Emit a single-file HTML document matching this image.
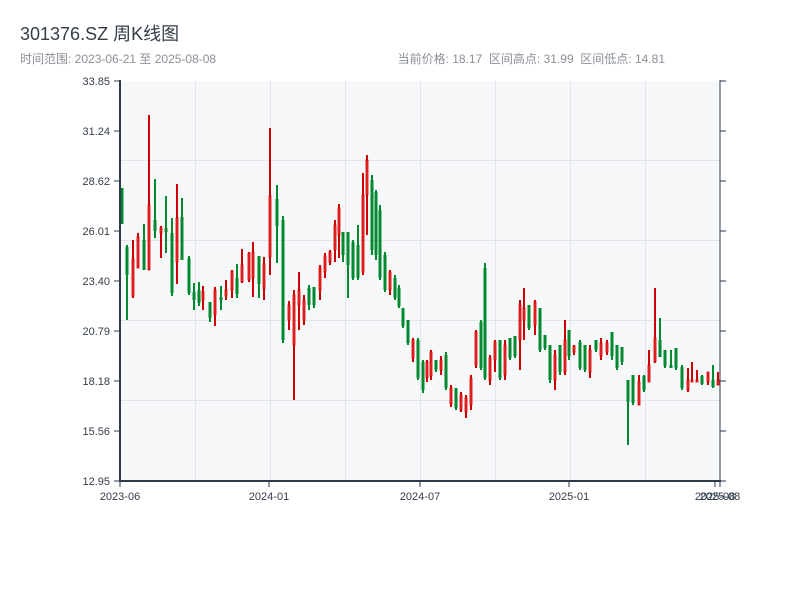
<!DOCTYPE html>
<html><head><meta charset="utf-8"><style>
body{margin:0;background:#fff;width:800px;height:600px;overflow:hidden;font-family:"Liberation Sans","Noto Sans CJK SC",sans-serif}
</style></head><body>
<svg id="s" width="800" height="600" xmlns="http://www.w3.org/2000/svg" style="position:absolute;left:0;top:0">
<text x="20" y="40" font-size="18" fill="#333d4a" font-family="Liberation Sans,Noto Sans CJK SC,sans-serif">301376.SZ 周K线图</text>
<text x="20" y="63" font-size="12" fill="#8a8f96" font-family="Liberation Sans,Noto Sans CJK SC,sans-serif">时间范围: 2023-06-21 至 2025-08-08</text>
<text x="665" y="63" font-size="12" fill="#8a8f96" text-anchor="end" font-family="Liberation Sans,Noto Sans CJK SC,sans-serif">当前价格: 18.17 &#160;区间高点: 31.99 &#160;区间低点: 14.81</text>
<rect x="120" y="81" width="600" height="400" fill="#f6f8fa"/>
<g id="grid" stroke="#e1e4ea" stroke-width="1"></g>
<g id="c"></g>
<g stroke="#2c3a4b" stroke-width="2" fill="none">
<line x1="120" y1="80" x2="120" y2="482"/>
<line x1="119" y1="481" x2="721" y2="481"/>
</g>
<line x1="720" y1="80" x2="720" y2="482" stroke="#2c3a4b" stroke-width="1"/>
<g id="ax" font-size="11" fill="#333d4a"></g>
</svg>
<script>
var ns="http://www.w3.org/2000/svg";
function el(p,t,a,txt){var e=document.createElementNS(ns,t);for(var k in a)e.setAttribute(k,a[k]);if(txt)e.textContent=txt;document.getElementById(p).appendChild(e);}
[160,240,320,400].forEach(function(y){el("grid","line",{x1:120,x2:720,y1:y+.5,y2:y+.5});});
[195,270,345,420,495,570,645].forEach(function(x){el("grid","line",{x1:x+.5,x2:x+.5,y1:81,y2:481});});
var yl=["33.85","31.24","28.62","26.01","23.40","20.79","18.18","15.56","12.95"];
yl.forEach(function(t,i){var y=81+i*50;el("ax","line",{x1:114,x2:120,y1:y,y2:y,stroke:"#2c3a4b"});el("ax","line",{x1:720,x2:726,y1:y,y2:y,stroke:"#2c3a4b"});el("ax","text",{x:110,y:y+4,"text-anchor":"end"},t);});
[[120,"2023-06"],[269,"2024-01"],[420,"2024-07"],[569,"2025-01"],[715,"2025-08"],[720,"2025-08"]].forEach(function(a){el("ax","line",{x1:a[0],x2:a[0],y1:481,y2:487,stroke:"#2c3a4b"});el("ax","text",{x:a[0],y:500,"text-anchor":"middle"},a[1]);});
var d=[
[120,188,224,188,224,0],[125,245,320,247,275,0],[131,240,298,259,296,1],[136,233,268,237,268,1],[142,224,270,240,270,0],[147,115,270,205,270,1],[153,179,238,220,231,0],[159,226,258,228,233,1],[164,196,253,228,232,0],[170,218,296,233,293,0],[175,184,284,218,262,1],[180,198,260,217,260,0],[187,256,295,258,293,0],[192,283,310,292,300,0],[197,282,306,290,303,0],[201,286,310,292,300,1],[208,302,322,302,318,0],[213,287,326,290,315,1],[219,286,310,297,300,0],[224,280,300,290,296,1],[230,270,298,271,290,1],[235,264,298,278,294,0],[240,249,283,265,282,1],[247,252,282,253,280,1],[251,242,297,252,278,1],[257,256,298,256,284,0],[262,257,300,264,289,1],[268,128,275,196,257,1],[275,185,263,199,226,0],[281,216,343,220,340,0],
[287,301,330,305,320,1],[292,290,400,295,345,1],[297,272,330,290,305,1],[302,295,325,300,320,1],[307,285,310,288,305,0],[312,287,308,287,305,0],[318,265,300,268,290,1],[323,253,278,256,272,1],[328,250,265,252,262,1],[333,220,262,225,250,1],[337,204,258,208,235,1],[341,232,262,232,255,0],[346,232,298,232,265,0],[351,240,280,242,278,0],[356,225,280,245,278,0],[361,173,275,195,272,1],[365,155,235,160,195,1],[370,175,255,180,250,0],[374,190,260,192,255,0],[378,205,280,210,278,0],[383,252,292,255,290,0],[388,270,295,272,290,1],[393,275,300,278,298,0],[397,285,308,288,306,0],[401,308,328,308,326,0],[406,320,345,320,343,0],[411,338,362,340,358,1],[416,338,380,340,378,0],[421,360,393,362,390,0],[425,360,382,362,378,1],[429,350,380,352,376,1],[434,360,372,360,370,0],[439,356,375,360,370,1],[444,352,390,355,388,0],[449,385,407,388,404,1],[454,388,410,388,408,0],[459,392,412,395,410,1],[464,395,418,398,412,1],[469,375,410,378,405,1],[474,330,368,332,365,1],[479,320,370,322,368,0],[483,263,380,268,378,0],[488,355,385,358,380,1],[493,340,372,342,360,1],[498,340,380,340,378,0],[503,340,380,345,375,1],[508,338,360,338,358,0],[513,336,358,336,356,0],[518,300,370,305,340,1],[522,288,340,308,320,1],[527,305,330,305,328,0],[533,300,335,302,325,1],[538,308,352,308,350,0],[543,335,350,335,348,0],[548,345,383,345,380,0],[553,350,390,355,380,1],[558,345,375,345,372,0],[563,320,375,340,372,1],[567,330,360,330,356,0],[572,345,355,346,352,1],[578,340,370,342,368,0],[583,345,372,345,370,0],[588,345,378,350,372,1],[594,340,352,340,350,0],[599,338,360,343,356,1],[605,340,355,343,352,1],[610,332,360,332,356,0],[615,345,370,345,368,0],[620,347,365,347,362,0],[626,380,445,380,402,0],[631,375,405,375,403,0],[637,375,405,382,405,1],[642,375,392,376,390,0],[647,350,382,365,382,1],[653,288,363,338,362,1],[658,318,357,340,357,0],[663,350,368,350,366,0],[669,350,368,365,368,0],[674,348,370,348,368,0],[680,365,390,367,388,0],[686,368,392,380,390,1],[690,362,382,380,382,1],[695,370,382,380,382,1],[700,375,385,376,384,0],[706,372,385,372,382,1],[711,365,388,380,387,0],[716,372,385,380,385,1]];
d.forEach(function(c){var x=c[0]+2;
if(c[5]){el("c","line",{x1:x,x2:x,y1:c[1],y2:c[2],stroke:"#d10000","stroke-width":2});el("c","rect",{x:x-1,y:c[3],width:2,height:Math.max(1,c[4]-c[3]),fill:"#f03030",stroke:"#cc0000","stroke-width":0.8});}
else{el("c","line",{x1:x,x2:x,y1:c[1],y2:c[2],stroke:"#008a30","stroke-width":2});el("c","rect",{x:x-1.5,y:c[3],width:3,height:Math.max(1,c[4]-c[3]),fill:"#008a30"});}
});
</script>
</body></html>
